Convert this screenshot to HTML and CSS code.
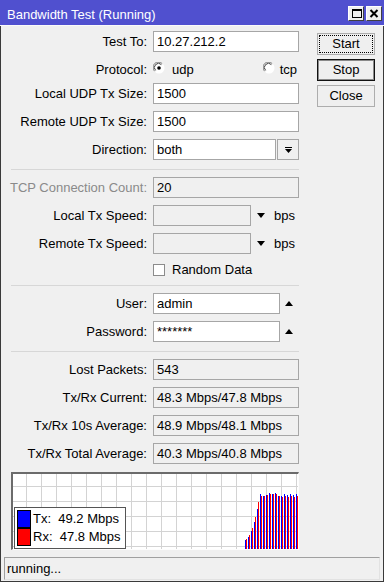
FILE: index.html
```html
<!DOCTYPE html>
<html lang="en">
<head>
  <meta charset="UTF-8">
  <title>Bandwidth Test (Running)</title>
  <link rel="stylesheet" href="styles.css">
</head>
<body>
  <div class="window">
    <div class="titlebar">
      <div class="title">Bandwidth Test (Running)</div>
      <div class="title-buttons">
        <div class="tbtn">
          <svg width="14" height="13" viewBox="0 0 14 13">
            <rect x="3.5" y="2.5" width="9" height="8" fill="none" stroke="#000"/>
            <rect x="3" y="2" width="10" height="2" fill="#000"/>
          </svg>
        </div>
        <div class="tbtn">
          <svg width="14" height="13" viewBox="0 0 14 13">
            <path d="M3.5 3L10.5 10M10.5 3L3.5 10" stroke="#000" stroke-width="2"/>
          </svg>
        </div>
      </div>
    </div>

    <div class="content">
      <div class="form">
        <div class="row first">
          <div class="label">Test To:</div>
          <div class="field w146">10.27.212.2</div>
        </div>
        <div class="row">
          <div class="label">Protocol:</div>
          <div class="radios">
            <div class="radio">
              <svg width="12" height="12" viewBox="0 0 12 12">
                <circle cx="6" cy="6" r="5.5" fill="#fff"/>
                <path d="M1.6 9.2A5.2 5.2 0 0 1 9.2 1.6" fill="none" stroke="#7a7a7a"/>
                <path d="M2.6 8.4A4 4 0 0 1 8.4 2.6" fill="none" stroke="#404040"/>
                <circle cx="6" cy="6" r="1.8" fill="#000"/>
              </svg>
              <span>udp</span>
            </div>
            <div class="radio tcp">
              <svg width="12" height="12" viewBox="0 0 12 12">
                <circle cx="6" cy="6" r="5.5" fill="#fff"/>
                <path d="M1.6 9.2A5.2 5.2 0 0 1 9.2 1.6" fill="none" stroke="#7a7a7a"/>
                <path d="M2.6 8.4A4 4 0 0 1 8.4 2.6" fill="none" stroke="#404040"/>
              </svg>
              <span>tcp</span>
            </div>
          </div>
        </div>
        <div class="row tight">
          <div class="label">Local UDP Tx Size:</div>
          <div class="field w146">1500</div>
        </div>
        <div class="row">
          <div class="label">Remote UDP Tx Size:</div>
          <div class="field w146">1500</div>
        </div>
        <div class="row">
          <div class="label">Direction:</div>
          <div class="field w123">both</div>
          <div class="drop-btn">
            <svg width="7" height="6" viewBox="0 0 7 6">
              <rect x="0" y="0" width="7" height="1" fill="#000"/>
              <path d="M0 2H7L3.5 6Z" fill="#000"/>
            </svg>
          </div>
        </div>

        <div class="separator"></div>

        <div class="row">
          <div class="label disabled">TCP Connection Count:</div>
          <div class="field w146 grey">20</div>
        </div>
        <div class="row">
          <div class="label">Local Tx Speed:</div>
          <div class="field w98 grey"></div>
          <svg class="arrow" width="8" height="5" viewBox="0 0 8 5"><path d="M0 0H8L4 5Z" fill="#000"/></svg>
          <span class="unit">bps</span>
        </div>
        <div class="row">
          <div class="label">Remote Tx Speed:</div>
          <div class="field w98 grey"></div>
          <svg class="arrow" width="8" height="5" viewBox="0 0 8 5"><path d="M0 0H8L4 5Z" fill="#000"/></svg>
          <span class="unit">bps</span>
        </div>
        <div class="row check-row">
          <div class="label"></div>
          <div class="checkbox"></div>
          <span class="check-text">Random Data</span>
        </div>

        <div class="separator sep-small"></div>

        <div class="row">
          <div class="label">User:</div>
          <div class="field w127">admin</div>
          <svg class="arrow up" width="8" height="5" viewBox="0 0 8 5"><path d="M0 5H8L4 0Z" fill="#000"/></svg>
        </div>
        <div class="row">
          <div class="label">Password:</div>
          <div class="field w127">*******</div>
          <svg class="arrow up" width="8" height="5" viewBox="0 0 8 5"><path d="M0 5H8L4 0Z" fill="#000"/></svg>
        </div>

        <div class="separator"></div>

        <div class="row">
          <div class="label">Lost Packets:</div>
          <div class="field w146 grey">543</div>
        </div>
        <div class="row">
          <div class="label">Tx/Rx Current:</div>
          <div class="field w146 grey">48.3 Mbps/47.8 Mbps</div>
        </div>
        <div class="row">
          <div class="label">Tx/Rx 10s Average:</div>
          <div class="field w146 grey">48.9 Mbps/48.1 Mbps</div>
        </div>
        <div class="row">
          <div class="label">Tx/Rx Total Average:</div>
          <div class="field w146 grey">40.3 Mbps/40.8 Mbps</div>
        </div>

        <div class="graph">
          <svg class="bars" width="285" height="75" viewBox="0 0 285 75">
            <g fill="#0000ff">
              <rect x="232" y="66" width="1" height="9"/>
              <rect x="235" y="63" width="1" height="12"/>
              <rect x="238" y="57" width="1" height="18"/>
              <rect x="241" y="48" width="1" height="27"/>
              <rect x="244" y="35" width="1" height="40"/>
              <rect x="247" y="20" width="1" height="55"/>
              <rect x="250" y="22" width="1" height="53"/>
              <rect x="253" y="21" width="1" height="54"/>
              <rect x="256" y="19" width="1" height="56"/>
              <rect x="259" y="20" width="1" height="55"/>
              <rect x="262" y="19" width="1" height="56"/>
              <rect x="265" y="22" width="1" height="53"/>
              <rect x="268" y="22" width="1" height="53"/>
              <rect x="271" y="20" width="1" height="55"/>
              <rect x="274" y="21" width="1" height="54"/>
              <rect x="277" y="20" width="1" height="55"/>
              <rect x="280" y="21" width="1" height="54"/>
              <rect x="283" y="20" width="1" height="55"/>
            </g>
            <g fill="#ff0000">
              <rect x="233" y="65" width="1" height="10"/>
              <rect x="236" y="61" width="1" height="14"/>
              <rect x="239" y="54" width="1" height="21"/>
              <rect x="242" y="43" width="1" height="32"/>
              <rect x="245" y="28" width="1" height="47"/>
              <rect x="248" y="22" width="1" height="53"/>
              <rect x="251" y="22" width="1" height="53"/>
              <rect x="254" y="21" width="1" height="54"/>
              <rect x="257" y="20" width="1" height="55"/>
              <rect x="260" y="20" width="1" height="55"/>
              <rect x="263" y="20" width="1" height="55"/>
              <rect x="266" y="22" width="1" height="53"/>
              <rect x="269" y="23" width="1" height="52"/>
              <rect x="272" y="22" width="1" height="53"/>
              <rect x="275" y="23" width="1" height="52"/>
              <rect x="278" y="22" width="1" height="53"/>
              <rect x="281" y="23" width="1" height="52"/>
              <rect x="284" y="22" width="1" height="53"/>
            </g>
          </svg>
          <div class="legend">
            <div class="legend-row"><span class="swatch tx"></span><span>Tx:  49.2 Mbps</span></div>
            <div class="legend-row"><span class="swatch rx"></span><span>Rx:  47.8 Mbps</span></div>
          </div>
        </div>
      </div>

      <div class="buttons">
        <div class="btn focused">Start</div>
        <div class="btn default">Stop</div>
        <div class="btn">Close</div>
      </div>
    </div>

    <div class="status">running...</div>
  </div>
</body>
</html>
```

FILE: styles.css
```css
body {
  margin: 0;
  background-color: #ffffff;
  font-family: "Liberation Sans", Arial, sans-serif;
  font-size: 13px;
  color: #000000;
}
.window {
  width: 384px;
  height: 582px;
  box-sizing: border-box;
  border: 1px solid #3a3a3a;
  border-top: none;
  background-color: #f0f0f0;
  display: flex;
  flex-direction: column;
}
.titlebar {
  height: 26px;
  flex-shrink: 0;
  box-sizing: border-box;
  background-color: #5050cf;
  border-bottom: 1px solid #fafafa;
  color: #ffffff;
  display: flex;
  justify-content: space-between;
  align-items: flex-start;
  padding: 0 2px 0 7px;
  margin: 0 -1px;
}
.title {
  margin-top: 5px;
  line-height: 20px;
}
.title-buttons {
  display: flex;
  gap: 2px;
  margin-top: 6px;
}
.tbtn {
  width: 16px;
  height: 15px;
  box-sizing: border-box;
  background-color: #f0f0f0;
  border: 1px solid;
  border-color: #ffffff #404040 #404040 #ffffff;
}
.tbtn svg {
  display: block;
}
.content {
  display: flex;
  padding-left: 10px;
}
.form {
  width: 288px;
}
.row {
  display: flex;
  align-items: center;
  height: 21px;
  margin-top: 7px;
}
.row.first {
  margin-top: 5px;
}
.row.tight {
  margin-top: 3px;
}
.row.check-row {
  margin-top: 5px;
}
.label {
  width: 136px;
  flex-shrink: 0;
  margin-right: 6px;
  display: flex;
  justify-content: flex-end;
  white-space: nowrap;
}
.label.disabled {
  color: #8a8a8a;
}
.field {
  height: 21px;
  box-sizing: border-box;
  border: 1px solid #a6a6a6;
  background-color: #ffffff;
  padding: 0 3px;
  line-height: 19px;
  white-space: nowrap;
  overflow: hidden;
  flex-shrink: 0;
}
.field.grey {
  background-color: #f0f0f0;
}
.w146 { width: 146px; }
.w127 { width: 127px; }
.w123 { width: 123px; }
.w98 { width: 98px; }
.drop-btn {
  width: 22px;
  height: 21px;
  box-sizing: border-box;
  margin-left: 1px;
  border: 1px solid #a6a6a6;
  background-color: #f0f0f0;
  display: flex;
  align-items: center;
  justify-content: center;
}
.radios {
  width: 146px;
  box-sizing: border-box;
  padding-right: 2px;
  display: flex;
  justify-content: space-between;
}
.radio {
  display: flex;
  align-items: center;
  gap: 7px;
}
.radio.tcp {
  gap: 5px;
}
.radio svg {
  margin-top: -3px;
}
.arrow {
  margin-left: 6px;
}
.arrow.up {
  margin-left: 5px;
}
.unit {
  margin-left: 9px;
}
.checkbox {
  width: 12px;
  height: 12px;
  box-sizing: border-box;
  border: 1px solid #8c8c8c;
  background-color: #ffffff;
}
.check-text {
  margin-left: 7px;
}
.separator {
  height: 1px;
  background-color: #d7d7d7;
  margin-top: 9px;
}
.separator.sep-small {
  margin-top: 5px;
}
.graph {
  position: relative;
  margin-top: 8px;
  height: 78px;
  box-sizing: border-box;
  border-top: 2px solid #6b6b6b;
  border-left: 2px solid #6b6b6b;
  border-right: 1px solid #fdfdfd;
  border-bottom: 1px solid #fdfdfd;
  background-color: #ffffff;
  background-image: linear-gradient(to right, #d3d3d3 1px, transparent 1px),
    linear-gradient(to bottom, #d3d3d3 1px, transparent 1px);
  background-size: 15px 15px;
  background-position: 13px 12px;
}
.bars {
  display: block;
}
.legend {
  position: absolute;
  left: 1px;
  top: 33px;
  width: 112px;
  height: 42px;
  box-sizing: border-box;
  border: 1px solid #555555;
  background-color: #ffffff;
  padding: 2px 0 0 2px;
}
.legend-row {
  display: flex;
  height: 18px;
  line-height: 18px;
  white-space: pre;
}
.swatch {
  width: 14px;
  height: 18px;
  box-sizing: border-box;
  border: 1px solid #000000;
  margin-right: 2px;
}
.swatch.tx {
  background-color: #0000ff;
}
.swatch.rx {
  background-color: #ff0000;
}
.buttons {
  margin-left: 18px;
  margin-top: 7px;
  display: flex;
  flex-direction: column;
  gap: 4px;
}
.btn {
  width: 58px;
  height: 22px;
  box-sizing: border-box;
  border: 1px solid #adadad;
  background-color: #efefef;
  text-align: center;
  line-height: 20px;
}
.btn.focused {
  outline: 1px dotted #000000;
  outline-offset: -3px;
}
.btn.default {
  border: 1px solid #111111;
  box-shadow: inset 0 0 0 1px #8a8a8a;
}
.status {
  margin: 7px 3px 0 3px;
  height: 23px;
  box-sizing: border-box;
  border: 1px solid;
  border-color: #a0a0a0 #e2e2e2 #e2e2e2 #a0a0a0;
  padding-left: 2px;
  line-height: 21px;
}
```
